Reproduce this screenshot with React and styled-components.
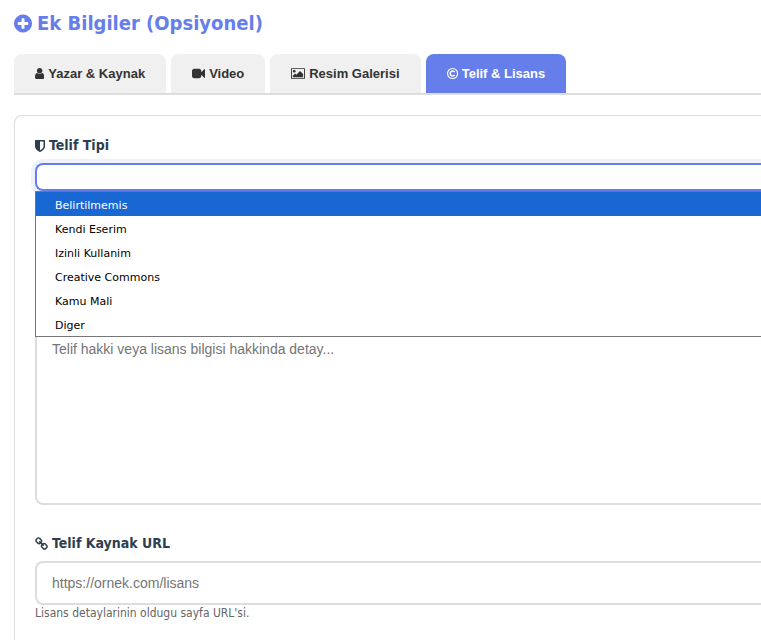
import { useState } from 'react';
import styled, { createGlobalStyle } from 'styled-components';

// - - - GLOBAL - - - //
const GlobalStyle = createGlobalStyle`
  * {
    box-sizing: border-box;
  }

  body {
    margin: 0;
    background: #fff;
    color: #2c3e50;
    font-family: "DejaVu Sans Condensed", "Noto Sans", sans-serif;
    overflow-x: hidden;
  }
`;

// - - - LAYOUT - - - //
const Wrapper = styled.main`
  padding: 8px 0 0 14px;
`;

const Title = styled.h2`
  display: flex;
  align-items: center;
  gap: 5px;
  margin: 0 0 16px;
  color: #667eea;
  font-size: 20px;
  line-height: 30px;
`;

const Icon = styled.svg`
  flex: none;
  height: ${({ $size }) => $size}px;
  fill: currentColor;
`;

// - - - TABS - - - //
const Tabs = styled.div`
  display: flex;
  gap: 5px;
  margin-bottom: 20px;
  border-bottom: 2px solid #ddd;
`;

const Tab = styled.button`
  display: flex;
  align-items: center;
  gap: 4px;
  padding: 12px 21px;
  border: 0;
  border-radius: 8px 8px 0 0;
  background: ${({ $active }) => ($active ? '#667eea' : '#f0f0f0')};
  color: ${({ $active }) => ($active ? '#fff' : '#333')};
  font: bold 13px/15px "Liberation Sans", Arial, sans-serif;
  cursor: pointer;
`;

// - - - FORM - - - //
const Panel = styled.section`
  padding: 20px 0 20px 20px;
  border: 1px solid #ddd;
  border-right: 0;
  border-radius: 8px 0 0 8px;
`;

const Field = styled.div`
  position: relative;
  margin-bottom: ${({ $gap }) => $gap}px;
`;

const Label = styled.label`
  display: flex;
  align-items: center;
  gap: 4px;
  margin-bottom: 8px;
  font-size: 14px;
  font-weight: bold;
  line-height: 19px;
`;

const control = `
  display: block;
  width: 100%;
  border: 2px solid #ddd;
  border-right: 0;
  border-radius: 8px 0 0 8px;
  background: #fff;
  color: #333;
  font: 14px/16px "Liberation Sans", Arial, sans-serif;
  outline: 0;

  &::placeholder {
    color: #757575;
  }
`;

const Select = styled.select`
  ${control}
  height: 28px;
  padding: 0 15px;
  appearance: none;
  border-color: #667eea;
  box-shadow: 0 0 0 4px #eff2fd;
`;

const Input = styled.input`
  ${control}
  padding: 12px 15px;
`;

const TextArea = styled.textarea`
  ${control}
  height: 178px;
  padding: 12px 15px;
  resize: none;
`;

const Help = styled.small`
  display: block;
  color: #666;
  font-size: 12px;
  line-height: 16px;
`;

// open list, hangs below the select
const Options = styled.ul`
  position: absolute;
  z-index: 1;
  top: 100%;
  left: 0;
  right: 0;
  margin: 0;
  padding: 0;
  border: 1px solid #767676;
  border-right: 0;
  background: #fff;
  list-style: none;
`;

const Option = styled.li`
  padding: 4px 19px 0;
  background: ${({ $selected }) => ($selected ? '#1967d2' : '#fff')};
  color: ${({ $selected }) => ($selected ? '#fff' : '#000')};
  font-family: "DejaVu Sans", sans-serif;
  font-size: 11px;
  line-height: 20px;
  cursor: default;
`;

// - - - ICONS - - - //
const PlusIcon = () => (
  <Icon $size={21} viewBox="128 0 1536 1792" aria-hidden="true">
    <path d="M1344 960v-128q0-26-19-45t-45-19h-256v-256q0-26-19-45t-45-19h-128q-26 0-45 19t-19 45v256h-256q-26 0-45 19t-19 45v128q0 26 19 45t45 19h256v256q0 26 19 45t45 19h128q26 0 45-19t19-45v-256h256q26 0 45-19t19-45zm320-64q0 209-103 385.5t-279.5 279.5-385.5 103-385.5-103-279.5-279.5-103-385.5 103-385.5 279.5-279.5 385.5-103 385.5 103 279.5 279.5 103 385.5z" />
  </Icon>
);

const UserIcon = () => (
  <Icon $size={13} viewBox="256 0 1280 1792" aria-hidden="true">
    <path d="M1536 1399q0 109-62.5 187t-150.5 78h-854q-88 0-150.5-78t-62.5-187q0-85 8.5-160.5t31.5-152 58.5-131 94-89 134.5-34.5q131 128 313 128t313-128q76 0 134.5 34.5t94 89 58.5 131 31.5 152 8.5 160.5zm-256-887q0 159-112.5 271.5t-271.5 112.5-271.5-112.5-112.5-271.5 112.5-271.5 271.5-112.5 271.5 112.5 112.5 271.5z" />
  </Icon>
);

const VideoIcon = () => (
  <Icon $size={13} viewBox="0 0 1792 1792" aria-hidden="true">
    <path d="M1792 352v1088q0 42-39 59-13 5-25 5-27 0-45-19l-403-403v166q0 119-84.5 203.5t-203.5 84.5h-704q-119 0-203.5-84.5t-84.5-203.5v-704q0-119 84.5-203.5t203.5-84.5h704q119 0 203.5 84.5t84.5 203.5v165l403-402q18-19 45-19 12 0 25 5 39 17 39 59z" />
  </Icon>
);

const ImageIcon = () => (
  <Icon $size={13} viewBox="64 0 1920 1792" aria-hidden="true">
    <path d="M704 576q0 80-56 136t-136 56-136-56-56-136 56-136 136-56 136 56 56 136zm1024 384v448h-1408v-192l320-320 160 160 512-512zm96-704h-1600q-13 0-22.5 9.5t-9.5 22.5v1216q0 13 9.5 22.5t22.5 9.5h1600q13 0 22.5-9.5t9.5-22.5v-1216q0-13-9.5-22.5t-22.5-9.5zm160 32v1216q0 66-47 113t-113 47h-1600q-66 0-113-47t-47-113v-1216q0-66 47-113t113-47h1600q66 0 113 47t47 113z" />
  </Icon>
);

const CopyrightIcon = () => (
  <Icon $size={13} viewBox="128 0 1536 1792" aria-hidden="true">
    <circle cx="896" cy="896" r="690" fill="none" stroke="currentColor" strokeWidth="156" />
    <path d="M1190 700a340 340 0 1 0 0 392" fill="none" stroke="currentColor" strokeWidth="200" />
  </Icon>
);

const ShieldIcon = () => (
  <Icon $size={14} viewBox="256 0 1280 1792" aria-hidden="true">
    <path d="M1344 960v-640h-448v1137q119-63 213-137 235-184 235-360zm192-768v768q0 86-33.5 170.5t-83 150-118 127.5-126.5 103-121 77.5-89.5 49.5-42.5 20q-12 6-26 6t-26-6q-16-7-42.5-20t-89.5-49.5-121-77.5-126.5-103-118-127.5-83-150-33.5-170.5v-768q0-26 19-45t45-19h1152q26 0 45 19t19 45z" />
  </Icon>
);

const LinkIcon = () => (
  <Icon $size={14} viewBox="64 0 1664 1792" aria-hidden="true">
    <path d="M1520 1216q0-40-28-68l-208-208q-28-28-68-28-42 0-72 32 3 3 19 18.5t21.5 21.5 15 19 13 25.5 3.5 27.5q0 40-28 68t-68 28q-15 0-27.5-3.5t-25.5-13-19-15-21.5-21.5-18.5-19q-33 31-33 73 0 40 28 68l206 207q27 27 68 27 40 0 68-26l147-146q28-28 28-67zm-703-705q0-40-28-68l-206-207q-28-28-68-28-39 0-68 27l-147 146q-28 28-28 67 0 40 28 68l208 208q27 27 68 27 42 0 72-31-3-3-19-18.5t-21.5-21.5-15-19-13-25.5-3.5-27.5q0-40 28-68t68-28q15 0 27.5 3.5t25.5 13 19 15 21.5 21.5 18.5 19q33-31 33-73zm895 705q0 120-85 203l-147 146q-83 83-203 83-121 0-204-85l-206-207q-83-83-83-203 0-123 88-209l-88-88q-86 88-208 88-120 0-204-84l-208-208q-84-84-84-204t85-203l147-146q83-83 203-83 121 0 204 85l206 207q83 83 83 203 0 123-88 209l88 88q86-88 208-88 120 0 204 84l208 208q84 84 84 204z" />
  </Icon>
);

// - - - DATA - - - //
const tabs = [
  { name: 'Yazar & Kaynak', TabIcon: UserIcon },
  { name: 'Video', TabIcon: VideoIcon },
  { name: 'Resim Galerisi', TabIcon: ImageIcon },
  { name: 'Telif & Lisans', TabIcon: CopyrightIcon },
];

const types = [
  'Belirtilmemis',
  'Kendi Eserim',
  'Izinli Kullanim',
  'Creative Commons',
  'Kamu Mali',
  'Diger',
];

const App = () => {
  const [tab, setTab] = useState('Telif & Lisans');
  const [type, setType] = useState('');
  const [open, setOpen] = useState(true);

  const pick = (name) => {
    setType(name);
    setOpen(false);
  };

  return (
    <>
      <GlobalStyle />
      <Wrapper>
        <Title><PlusIcon />Ek Bilgiler (Opsiyonel)</Title>

        <Tabs role="tablist">
          {tabs.map(({ name, TabIcon }) => (
            <Tab
              key={name}
              type="button"
              role="tab"
              aria-selected={tab === name}
              $active={tab === name}
              onClick={() => setTab(name)}
            >
              <TabIcon />{name}
            </Tab>
          ))}
        </Tabs>

        <Panel>
          <Field $gap={136}>
            <Label htmlFor="type"><ShieldIcon />Telif Tipi</Label>
            <Select id="type" value={type} onChange={(e) => pick(e.target.value)}>
              <option value="" hidden></option>
              {types.map((name) => <option key={name}>{name}</option>)}
            </Select>
            {open && (
              <Options role="listbox" aria-label="Telif Tipi">
                {types.map((name) => (
                  <Option
                    key={name}
                    role="option"
                    aria-selected={name === (type || types[0])}
                    $selected={name === (type || types[0])}
                    onClick={() => pick(name)}
                  >
                    {name}
                  </Option>
                ))}
              </Options>
            )}
          </Field>

          <Field $gap={29}>
            <TextArea
              aria-label="Telif hakki veya lisans bilgisi"
              placeholder="Telif hakki veya lisans bilgisi hakkinda detay..."
            />
          </Field>

          <Field $gap={29}>
            <Label htmlFor="url"><LinkIcon />Telif Kaynak URL</Label>
            <Input id="url" type="url" placeholder="https://ornek.com/lisans" aria-describedby="url-help" />
            <Help id="url-help">Lisans detaylarinin oldugu sayfa URL'si.</Help>
          </Field>
        </Panel>
      </Wrapper>
    </>
  );
};

export default App;
